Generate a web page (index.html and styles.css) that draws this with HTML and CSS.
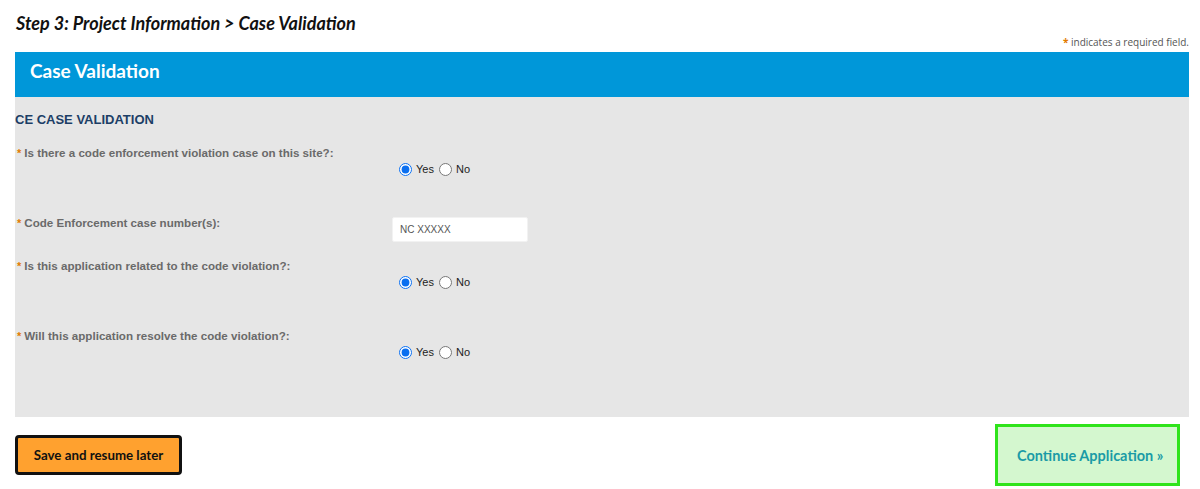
FILE: index.html
```html
<!DOCTYPE html>
<html lang="en">
<head>
  <meta charset="UTF-8">
  <meta name="viewport" content="width=device-width, initial-scale=1.0">
  <title>Case Validation</title>
  <link rel="stylesheet" href="styles.css">
</head>
<body>
  <div class="page">
    <h1 class="step-title">Step 3: Project Information &gt; Case Validation</h1>
    <div class="required-note"><span class="req">*</span> indicates a required field.</div>

    <div class="section-head">Case Validation</div>

    <div class="panel">
      <h2 class="panel-title">CE CASE VALIDATION</h2>

      <div class="row">
        <div class="label"><span class="req">*</span>Is there a code enforcement violation case on this site?:</div>
        <div class="field radios">
          <label><input type="radio" name="q1" checked>Yes</label>
          <label><input type="radio" name="q1">No</label>
        </div>
      </div>

      <div class="row row-input">
        <div class="label"><span class="req">*</span>Code Enforcement case number(s):</div>
        <div class="field">
          <input type="text" class="text-input" value="NC XXXXX">
        </div>
      </div>

      <div class="row">
        <div class="label"><span class="req">*</span>Is this application related to the code violation?:</div>
        <div class="field radios">
          <label><input type="radio" name="q3" checked>Yes</label>
          <label><input type="radio" name="q3">No</label>
        </div>
      </div>

      <div class="row">
        <div class="label"><span class="req">*</span>Will this application resolve the code violation?:</div>
        <div class="field radios">
          <label><input type="radio" name="q4" checked>Yes</label>
          <label><input type="radio" name="q4">No</label>
        </div>
      </div>
    </div>

    <div class="actions">
      <button class="btn-save">Save and resume later</button>
      <button class="btn-continue">Continue Application &raquo;</button>
    </div>
  </div>
</body>
</html>
```

FILE: styles.css
```css
body {
  margin: 0;
  background-color: #fff;
  font-family: Arial, "Liberation Sans", sans-serif;
}

.page {
  padding: 0 11px 0 15px;
}

.step-title {
  margin: 0;
  padding: 12px 0 0 1px;
  font-family: Lato, sans-serif;
  font-style: italic;
  font-weight: 700;
  font-size: 18px;
  line-height: 22px;
  color: #111;
}

.required-note {
  text-align: right;
  font-family: "Open Sans", sans-serif;
  font-size: 10px;
  line-height: 14px;
  color: #555;
  padding-top: 1px;
  height: 17px;
}

.req {
  color: #e27b00;
  font-weight: 700;
  font-size: 10px;
}

.section-head {
  background-color: #0097d9;
  color: #fff;
  height: 45px;
  box-sizing: border-box;
  padding: 7px 15px;
  font-family: Lato, sans-serif;
  font-weight: 700;
  font-size: 19px;
  line-height: 24px;
}

.panel {
  background-color: #e6e6e6;
  height: 320px;
  box-sizing: border-box;
  padding-top: 15px;
}

.panel-title {
  margin: 0 0 18px;
  font-size: 13px;
  line-height: 16px;
  font-weight: 700;
  color: #1c3e66;
}

.row {
  display: flex;
}

.label {
  width: 375px;
  padding-left: 2px;
  font-size: 11.6px;
  line-height: 14px;
  font-weight: 700;
  color: #6a6a6a;
}

.label .req {
  font-size: 11px;
  margin-right: 3px;
}

.radios {
  padding: 16px 0 40px 2px;
  font-size: 11px;
  line-height: 14px;
  color: #222;
  display: flex;
}

.radios label {
  display: flex;
  align-items: center;
}

.radios input {
  margin: 0 4px 0 5px;
  width: 13px;
  height: 13px;
  accent-color: #0a6ff0;
}

.row-input {
  padding-bottom: 17px;
}

.text-input {
  width: 136px;
  height: 25px;
  box-sizing: border-box;
  margin-top: 1px;
  border: 1px solid #f2f2f2;
  border-radius: 2px;
  padding: 0 7px;
  font-family: Arial, sans-serif;
  font-size: 10px;
  color: #555;
  background-color: #fff;
}

.actions {
  display: flex;
  justify-content: space-between;
  align-items: center;
  padding-top: 7px;
}

.btn-save {
  background-color: #ffa12f;
  color: #111;
  border: 3px solid #111;
  border-radius: 4px;
  width: 167px;
  height: 40px;
  font-family: Lato, sans-serif;
  font-weight: 700;
  font-size: 13.3px;
  cursor: pointer;
}

.btn-continue {
  background-color: #d4f7cf;
  color: #1a9ba6;
  border: 3px solid #2fe41b;
  width: 185px;
  height: 62px;
  margin-right: 9px;
  font-family: Lato, sans-serif;
  font-weight: 700;
  font-size: 14.5px;
  text-align: left;
  padding-left: 19px;
  cursor: pointer;
}
```
